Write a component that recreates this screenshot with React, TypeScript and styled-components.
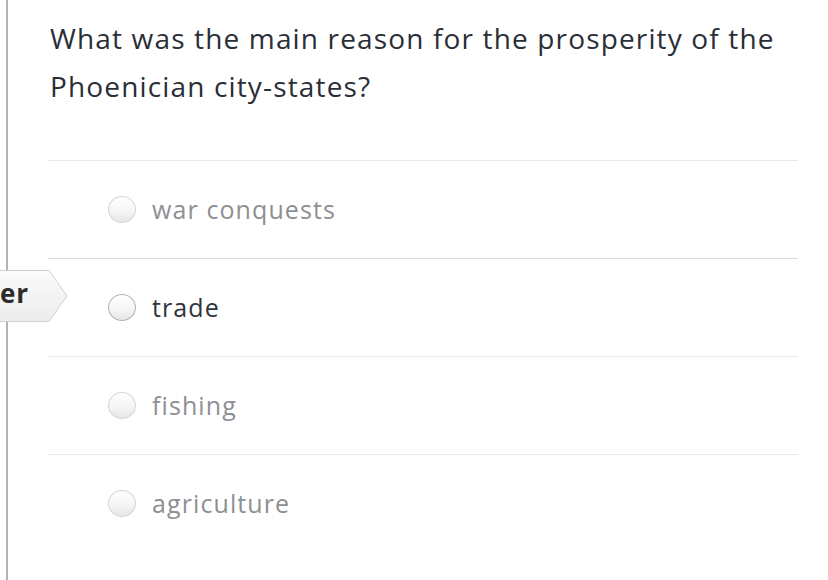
import styled, { createGlobalStyle } from "styled-components";

const GlobalStyle = createGlobalStyle`
	html, body {
		margin: 0;
		padding: 0;
		background: #ffffff;
		overflow: hidden;
	}
	body {
		font-family: "Open Sans", "Noto Sans", sans-serif;
	}
`;

const Page = styled.div`
	width: 828px;
	height: 580px;
	display: flex;
	overflow: hidden;
`;

const Rail = styled.div`
	margin-left: 6px;
	width: 2px;
	height: 100%;
	background-color: #b3b3b3;
	flex-shrink: 0;
`;

const Content = styled.div`
	display: flex;
	flex-direction: column;
	padding: 14px 30px 0 40px;
	width: 750px;
`;

const Question = styled.h1`
	margin: 0 0 50px 2px;
	font-size: 28px;
	line-height: 48px;
	font-weight: 500;
	color: #2a2e37;
	letter-spacing: 1.15px;
	white-space: nowrap;
`;

const Choice = styled.div<{ active?: boolean }>`
	position: relative;
	display: flex;
	align-items: center;
	gap: 16px;
	height: 97px;
	padding-left: 60px;
	border-top: 1px solid ${(props) => (props.active ? "#dcdcdc" : "#e8e8e8")};
`;

const Radio = styled.span<{ active?: boolean }>`
	box-sizing: border-box;
	width: 28px;
	height: 27px;
	border-radius: 50%;
	border: 1.5px solid ${(props) => (props.active ? "#b4b4b4" : "#d6d6d6")};
	background: linear-gradient(180deg, #ffffff 0%, #f4f4f4 60%, #e6e6e6 100%);
`;

const Label = styled.span<{ active?: boolean }>`
	font-size: 25px;
	letter-spacing: 1.1px;
	color: ${(props) => (props.active ? "#2f333a" : "#8e8f93")};
	padding-bottom: 2px;
`;

const Tag = styled.div`
	position: absolute;
	left: -48px;
	top: 11px;
	width: 68px;
	height: 52px;
	display: flex;
	align-items: center;
`;

const TagShape = styled.svg`
	position: absolute;
	inset: 0;
	width: 100%;
	height: 100%;
`;

const TagText = styled.span`
	position: relative;
	font-size: 26px;
	font-weight: 700;
	color: #2b2b2b;
	padding-bottom: 6px;
	letter-spacing: 1px;
`;

const choices = ["war conquests", "trade", "fishing", "agriculture"];

export default function App() {
	return (
		<Page>
			<GlobalStyle />
			<Rail />
			<Content>
				<Question>
					What was the main reason for the prosperity of the
					<br />
					Phoenician city-states?
				</Question>
				{choices.map((c) => {
					const active = c === "trade";
					return (
						<Choice key={c} active={active}>
							{active && (
								<Tag>
									<TagShape viewBox="0 0 68 52">
										<defs>
											<linearGradient id="tagfill" x1="0" y1="0" x2="0" y2="1">
												<stop offset="0" stopColor="#fbfbfb" />
												<stop offset="1" stopColor="#ececec" />
											</linearGradient>
										</defs>
										<polygon
											points="-2,0.5 49,0.5 67,26 49,51.5 -2,51.5"
											fill="url(#tagfill)"
											stroke="#d0d0d0"
											strokeWidth="1"
										/>
									</TagShape>
									<TagText>er</TagText>
								</Tag>
							)}
							<Radio active={active} />
							<Label active={active}>{c}</Label>
						</Choice>
					);
				})}
			</Content>
		</Page>
	);
}
